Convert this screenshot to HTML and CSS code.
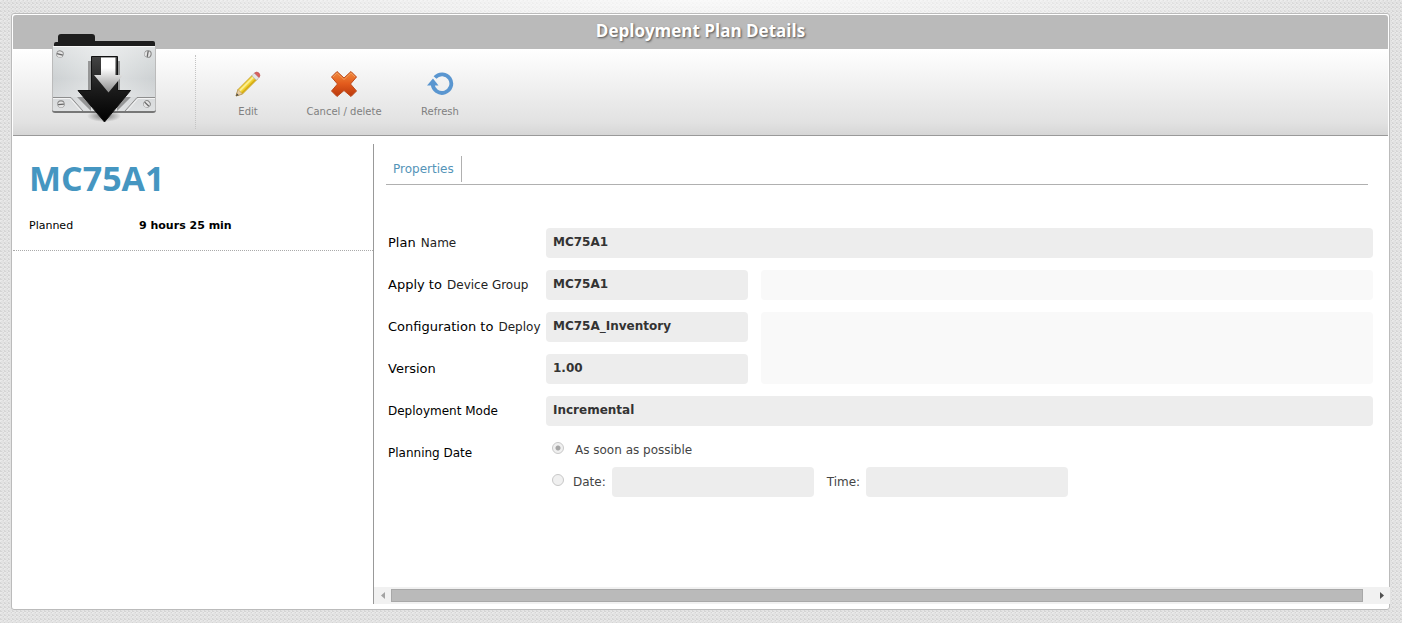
FILE: index.html
```html
<!DOCTYPE html>
<html lang="en">
<head>
    <meta charset="UTF-8">
    <meta name="viewport" content="width=device-width, initial-scale=1.0">
    <title>Deployment Plan Details</title>
    <link rel="stylesheet" href="styles.css">
</head>
<body>
    <div class="window">
        <header>
            <h1>Deployment Plan Details</h1>
            <div class="toolbar">
                <div class="logo">
                    <svg width="110" height="92" viewBox="0 0 110 92">
                        <defs>
                            <linearGradient id="plate" x1="0" y1="0" x2="0" y2="1">
                                <stop offset="0" stop-color="#dfe2e3"/>
                                <stop offset="0.5" stop-color="#cdd1d3"/>
                                <stop offset="1" stop-color="#dfe1e2"/>
                            </linearGradient>
                            <linearGradient id="shine" x1="0" y1="0" x2="1" y2="0">
                                <stop offset="0" stop-color="#fff" stop-opacity="0"/>
                                <stop offset="0.5" stop-color="#fff" stop-opacity="0.4"/>
                                <stop offset="1" stop-color="#fff" stop-opacity="0"/>
                            </linearGradient>
                            <linearGradient id="dark" x1="0" y1="0" x2="0" y2="1">
                                <stop offset="0" stop-color="#444"/>
                                <stop offset="0.5" stop-color="#1c1c1c"/>
                                <stop offset="1" stop-color="#000"/>
                            </linearGradient>
                            <linearGradient id="light" x1="0" y1="0" x2="0" y2="1">
                                <stop offset="0.3" stop-color="#fff"/>
                                <stop offset="1" stop-color="#8c8c8c"/>
                            </linearGradient>
                            <radialGradient id="shadow">
                                <stop offset="0" stop-color="#000" stop-opacity="0.5"/>
                                <stop offset="1" stop-color="#000" stop-opacity="0"/>
                            </radialGradient>
                            <g id="screw">
                                <circle r="3.7" fill="#888"/>
                                <circle r="3" cy="0.4" fill="#e4e4e4"/>
                                <path d="M-3 0.3H3" stroke="#666" stroke-width="1.3"/>
                            </g>
                        </defs>
                        <path d="M4 15V10q0-2 2-2H8V3q0-3 3-3H42q3 0 3 3V7H103q2 0 2 2V15z" fill="#1d1d1d"/>
                        <path d="M2 12H106V76q0 3-3 3H5q-3 0-3-3z" fill="#777"/>
                        <path d="M2 12H106V75q0 2-2 2H4q-2 0-2-2z" fill="url(#plate)"/>
                        <path d="M3 13H105V63H3z" fill="url(#shine)"/>
                        <path d="M2 12.500H106" stroke="#f7f7f7"/>
                        <path d="M2.500 12V76M105.500 12V76" stroke="#bbb"/>
                        <path d="M3 63.500H21L33 77M105 63.500H87L75 77" fill="none" stroke="#8e8e8e"/>
                        <path d="M3 64.500H20L31 77M105 64.500H88L77 77" fill="none" stroke="#f3f3f3"/>
                        <path d="M38 27h4V57h-4zM67 27h3V57h-3zM27 63l14 0 0 14zM81 63l-14 0 0 14z" fill="#777" opacity="0.7"/>
                        <ellipse cx="54" cy="82" rx="17" ry="6" fill="url(#shadow)"/>
                        <path d="M41.500 22.500H67.500V56.500H80.500L54.500 88L28 56.500H41.500z" fill="url(#dark)" stroke="#111"/>
                        <path d="M51 23.500H65.500V41H73L58.500 58.500L44 41H51z" fill="url(#light)"/>
                        <use href="#screw" transform="translate(10 20) rotate(15)"/>
                        <use href="#screw" transform="translate(98 20) rotate(100)"/>
                        <use href="#screw" transform="translate(11 70) rotate(-5)"/>
                        <use href="#screw" transform="translate(97 70) rotate(45)"/>
                    </svg>
                </div>
                <nav class="actions">
                    <button type="button">
                        <svg width="28" height="28" viewBox="0 0 28 28">
                            <path d="M2 26L4 19.500L18.500 5L23 9.500L8.500 24z" fill="#f0cf2e" stroke="#c09a2c" stroke-width="0.8"/>
                            <path d="M5.500 21L20 6.500" stroke="#fbee8e" stroke-width="2"/>
                            <path d="M8 23L22.500 8.700" stroke="#d3aa16" stroke-width="1.2"/>
                            <path d="M2 26L4 19.500L8.500 24z" fill="#e8cda2" stroke="#b0905f" stroke-width="0.6"/>
                            <path d="M2 26L2.800 23.300L4.800 25.200z" fill="#444"/>
                            <path d="M17.800 5.700L20.500 3L25 7.500L22.300 10.200z" fill="#e5e5e5" stroke="#aaa" stroke-width="0.6"/>
                            <path d="M20.500 3Q22.500 1 25 3Q27 5.500 25 7.500z" fill="#d9605c" stroke="#b84a48" stroke-width="0.5"/>
                        </svg>
                        <span>Edit</span>
                    </button>
                    <button type="button">
                        <svg width="28" height="28" viewBox="0 0 28 28">
                            <defs>
                                <linearGradient id="cross" x1="0" y1="0" x2="0" y2="1">
                                    <stop offset="0" stop-color="#f28a3c"/>
                                    <stop offset="0.5" stop-color="#e25a1c"/>
                                    <stop offset="1" stop-color="#b9380c"/>
                                </linearGradient>
                            </defs>
                            <path d="M7 1.500L14 8L21 1.500L26.500 7L20.500 14L26.500 21L21 26.500L14 20.500L7 26.500L1.500 21L7.500 14L1.500 7z" fill="url(#cross)" stroke="#bd4a1c" stroke-linejoin="round"/>
                            <path d="M3 7L7 3L14 9.500L21 3L25 7" fill="none" stroke="#f29a58"/>
                        </svg>
                        <span>Cancel / delete</span>
                    </button>
                    <button type="button">
                        <svg width="28" height="28" viewBox="0 0 28 28">
                            <path d="M9 7.500A9.300 9.300 0 1 1 6.700 14" fill="none" stroke="#5a96d0" stroke-width="3.800"/>
                            <path d="M1 15.500L7 8.500L12.500 15.500z" fill="#5a96d0"/>
                        </svg>
                        <span>Refresh</span>
                    </button>
                </nav>
            </div>
        </header>

        <main>
            <aside>
                <div class="summary">
                    <h2>MC75A1</h2>
                    <dl>
                        <dt>Planned</dt>
                        <dd>9 hours 25 min</dd>
                    </dl>
                </div>
            </aside>

            <section class="details">
                <div class="tabs">
                    <a href="#properties">Properties</a>
                </div>

                <form class="properties" id="properties">
                    <label for="planName">Plan <small>Name</small></label>
                    <input class="field wide" id="planName" type="text" value="MC75A1" readonly>

                    <label for="deviceGroup">Apply to <small>Device Group</small></label>
                    <input class="field" id="deviceGroup" type="text" value="MC75A1" readonly>
                    <div class="note"></div>

                    <label for="configuration">Configuration to <small>Deploy</small></label>
                    <input class="field" id="configuration" type="text" value="MC75A_Inventory" readonly>
                    <div class="note tall"></div>

                    <label for="version">Version</label>
                    <input class="field" id="version" type="text" value="1.00" readonly>

                    <label class="small" for="mode">Deployment Mode</label>
                    <input class="field wide" id="mode" type="text" value="Incremental" readonly>

                    <span class="label small" id="planningLabel">Planning Date</span>
                    <div class="planning wide" role="radiogroup" aria-labelledby="planningLabel">
                        <div class="option first">
                            <input type="radio" name="planning" id="asap" checked disabled>
                            <label for="asap">As soon as possible</label>
                        </div>
                        <div class="option">
                            <input type="radio" name="planning" id="onDate" disabled>
                            <label for="onDate">Date:</label>
                            <input class="field" id="date" type="text" aria-label="Date" readonly>
                            <label class="time" for="time">Time:</label>
                            <input class="field" id="time" type="text" readonly>
                        </div>
                    </div>
                </form>

                <div class="scrollbar">
                    <button type="button" aria-label="Scroll left" disabled>
                        <svg width="4" height="7" viewBox="0 0 4 7"><path d="M4 0V7L0 3.500z" fill="#a3a3a3"/></svg>
                    </button>
                    <div class="track">
                        <div class="thumb"></div>
                    </div>
                    <button type="button" aria-label="Scroll right">
                        <svg width="4" height="7" viewBox="0 0 4 7"><path d="M0 0V7L4 3.500z" fill="#505050"/></svg>
                    </button>
                </div>
            </section>
        </main>
    </div>
</body>
</html>
```
FILE: styles.css
```css
* {
    box-sizing: border-box;
}

body {
    margin: 0;
    padding: 13px 12px 13px 11px;
    min-height: 100vh;
    display: flex;
    font-family: Verdana, "DejaVu Sans", sans-serif;
    font-size: 13px;
    color: #000;
    background-color: #e2e2e2;
    background-image:
        radial-gradient(ellipse 700px 60px at 50% 0, rgba(255, 255, 255, 0.8), rgba(255, 255, 255, 0)),
        linear-gradient(45deg, #d5d5d5 25%, transparent 25%, transparent 75%, #d5d5d5 75%),
        linear-gradient(135deg, #e9e9e9 25%, transparent 25%, transparent 75%, #e9e9e9 75%);
    background-size: 100% 100%, 4px 4px, 4px 4px;
}

.window {
    flex: 1;
    display: flex;
    flex-direction: column;
    padding: 1px;
    background: #fff;
    border: 1px solid #bbb;
    border-radius: 3px;
}

/* Title bar and toolbar */
h1 {
    margin: 0;
    height: 34px;
    line-height: 32px;
    background: #bababa;
    border-radius: 3px 3px 0 0;
    color: #fff;
    font-family: "Trebuchet MS", "Open Sans", sans-serif;
    font-size: 17px;
    font-weight: bold;
    text-align: center;
    text-shadow: 1px 1px 2px #555;
}

.toolbar {
    display: flex;
    height: 87px;
    background: linear-gradient(#fff, #e2e2e2 85%, #d6d6d6);
    border-bottom: 1px solid #999;
}

.logo {
    width: 183px;
    margin: 6px 0;
    padding-left: 37px;
    border-right: 1px dotted #c4c4c4;
}

.logo svg {
    display: block;
    margin-top: -21px;
}

.actions {
    display: flex;
    align-items: flex-start;
    padding: 21px 0 0 4px;
}

.actions button {
    width: 96px;
    padding: 0;
    border: none;
    background: none;
    color: #808080;
    font-family: inherit;
    font-size: 10px;
    white-space: nowrap;
    cursor: pointer;
}

.actions svg {
    display: block;
    margin: 0 auto 8px;
}

/* Content */
main {
    flex: 1;
    display: flex;
    padding: 8px 0 4px;
}

aside {
    width: 360px;
}

.summary {
    padding: 12px 16px 17px;
    border-bottom: 1px dotted #aaa;
}

h2 {
    margin: 0 0 19px;
    color: #4596c1;
    font-family: "Trebuchet MS", "Open Sans", sans-serif;
    font-size: 34px;
    font-weight: bold;
    line-height: 44px;
}

dl {
    display: flex;
    margin: 0;
    font-size: 11px;
    line-height: 14px;
}

dt {
    width: 110px;
}

dd {
    margin: 0;
    font-weight: bold;
}

.details {
    flex: 1;
    display: flex;
    flex-direction: column;
    border-left: 1px solid #999;
}

.tabs {
    margin: 12px 20px 0 12px;
    padding-bottom: 2px;
    display: flex;
    border-bottom: 1px solid #b0b0b0;
}

.tabs a {
    padding: 0 7px;
    border-right: 1px solid #b0b0b0;
    color: #5494b8;
    font-size: 12px;
    line-height: 26px;
    text-decoration: none;
}

.properties {
    display: grid;
    grid-template-columns: 145px 202px 1fr;
    grid-auto-rows: minmax(30px, auto);
    gap: 12px 13px;
    margin: 43px 15px 0 14px;
}

.properties > label,
.label {
    line-height: 30px;
    white-space: nowrap;
}

small {
    margin-left: 1px;
    font-size: 12px;
    color: #222;
}

.small {
    font-size: 12px;
}

.field {
    width: 100%;
    height: 30px;
    padding: 0 7px 3px;
    border: none;
    border-radius: 4px;
    background: #ededed;
    color: #333;
    font-family: inherit;
    font-size: 12px;
    font-weight: bold;
}

.wide {
    grid-column: 2 / 4;
}

.note {
    border-radius: 4px;
    background: #f9f9f9;
}

.tall {
    grid-row: span 2;
}

.planning {
    color: #444;
    font-size: 12px;
}

.option {
    display: flex;
    align-items: center;
}

.option.first {
    height: 24px;
    margin-bottom: 5px;
}

.option.first label {
    margin-left: 2px;
}

.option .field {
    width: 202px;
    margin-left: 6px;
}

.option .time {
    margin-left: 13px;
}

input[type="radio"] {
    appearance: none;
    width: 12px;
    height: 12px;
    margin: 0 9px 4px 6px;
    border: 1px solid #c8c8c8;
    border-radius: 50%;
    background: #f0f0f0;
}

input[type="radio"]:checked {
    background: radial-gradient(circle, #a6a6a6 2px, #f0f0f0 3px);
}

/* Horizontal scrollbar */
.scrollbar {
    display: flex;
    height: 17px;
    margin: auto -2px 0 0;
    background: #f1f1f1;
}

.scrollbar button {
    display: flex;
    align-items: center;
    justify-content: center;
    width: 17px;
    padding: 0;
    border: none;
    background: none;
}

.track {
    flex: 1;
    display: flex;
    padding: 2px 0;
}

.thumb {
    width: 99%;
    background: #bababa;
    border: 1px solid #a8a8a8;
}
```
